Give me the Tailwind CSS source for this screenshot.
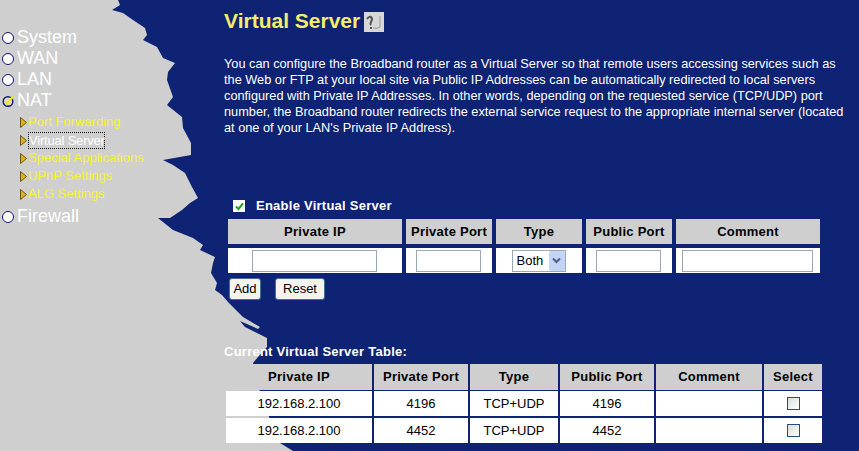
<!DOCTYPE html>
<html lang="en">
<head>
    <meta charset="UTF-8">
    <title>Virtual Server</title>
    <script src="https://cdn.jsdelivr.net/npm/@tailwindcss/browser@4"></script>
</head>
<body class="bg-[#0e2373]">
    <div class="relative w-[859px] h-[451px] overflow-hidden bg-[#0e2373] font-['Liberation_Sans',Arial,sans-serif]">
        <!-- torn paper edge behind everything -->
        <svg class="absolute left-0 top-0" width="859" height="451" viewBox="0 0 859 451">
            <polygon fill="#cfcfcf" points="0,0 118,0 120,5 112,10 123,13 133,20 145,28 147,35 143,40 157,47 163,58 175,63 168,72 167,80 173,97 167,105 182,117 183,128 191,143 191,155 163,160 173,165 185,173 192,187 198,198 190,203 182,210 170,218 158,218 173,230 193,238 203,245 200,250 215,257 213,263 211,273 217,283 215,290 222,295 228,302 233,307 243,317 260,327 258,329 240,321 245,327 255,332 267,338 267,347 258,357 253,363 262,400 280,443 293,451 0,451"/>
        </svg>

        <div class="relative flex h-full">
            <!-- left menu -->
            <aside class="w-[224px] shrink-0 pt-[27px] text-white">
                <div class="flex items-center h-[21px] text-[18px]"><span class="w-[12px] h-[12px] ml-[2px] mr-[3px] rounded-full border-[1.5px] border-[#14147a] bg-white"></span>System</div>
                <div class="flex items-center h-[21px] text-[18px]"><span class="w-[12px] h-[12px] ml-[2px] mr-[3px] rounded-full border-[1.5px] border-[#14147a] bg-white"></span>WAN</div>
                <div class="flex items-center h-[21px] text-[18px]"><span class="w-[12px] h-[12px] ml-[2px] mr-[3px] rounded-full border-[1.5px] border-[#14147a] bg-white"></span>LAN</div>
                <div class="flex items-center h-[21px] text-[18px]">
                    <svg class="ml-[2px] mr-[3px]" width="12" height="12" viewBox="0 0 12 12"><circle cx="6" cy="6.5" r="4.8" fill="#dfdfd0" stroke="#14147a" stroke-width="1.4"/><path d="M3 5.5l2 3 6-7" fill="none" stroke="#eeea20" stroke-width="2"/></svg>NAT
                </div>
                <div class="flex flex-col pl-[20px] pt-[2px] text-[13px] text-[#f5f52a]">
                    <div class="flex items-center h-[18px]"><svg class="mr-[1px]" width="7" height="11" viewBox="0 0 7 11"><path d="M.5.5 6.5 5.5.5 10.5z" fill="#e0b020" stroke="#6a5a10"/></svg>Port Forwarding</div>
                    <div class="flex items-center h-[18px]"><svg class="mr-[1px]" width="7" height="11" viewBox="0 0 7 11"><path d="M.5.5 6.5 5.5.5 10.5z" fill="#e0b020" stroke="#6a5a10"/></svg><span class="w-[77px] whitespace-nowrap tracking-[-0.2px] text-white border border-dotted border-black leading-[15px]">Virtual Server</span></div>
                    <div class="flex items-center h-[18px]"><svg class="mr-[1px]" width="7" height="11" viewBox="0 0 7 11"><path d="M.5.5 6.5 5.5.5 10.5z" fill="#e0b020" stroke="#6a5a10"/></svg>Special Applications</div>
                    <div class="flex items-center h-[18px]"><svg class="mr-[1px]" width="7" height="11" viewBox="0 0 7 11"><path d="M.5.5 6.5 5.5.5 10.5z" fill="#e0b020" stroke="#6a5a10"/></svg>UPnP Settings</div>
                    <div class="flex items-center h-[18px]"><svg class="mr-[1px]" width="7" height="11" viewBox="0 0 7 11"><path d="M.5.5 6.5 5.5.5 10.5z" fill="#e0b020" stroke="#6a5a10"/></svg>ALG Settings</div>
                </div>
                <div class="flex items-center h-[21px] mt-[3px] text-[18px]"><span class="w-[12px] h-[12px] ml-[2px] mr-[3px] rounded-full border-[1.5px] border-[#14147a] bg-white"></span>Firewall</div>
            </aside>

            <!-- main content -->
            <main class="flex-1 text-white">
                <div class="flex items-center h-[21px] mt-[10px] gap-[4px]">
                    <h1 class="text-[21px] font-bold text-[#f5ec6e]">Virtual Server</h1>
                    <svg class="mt-[2px]" width="20" height="20" viewBox="0 0 20 20"><rect width="20" height="20" fill="#d8d8d8"/><path d="M3 7q2-3 4-2 2 2 0 5-1 2 0 3" fill="none" stroke="#555" stroke-width="2"/><path d="M6 16h2" stroke="#555" stroke-width="2"/><path d="M9 16q5 1 7-1V4" fill="none" stroke="#999"/></svg>
                </div>
                <p class="mt-[25px] w-[625px] text-[12.75px] leading-[16px]">You can configure the Broadband router as a Virtual Server so that remote users accessing services such as the Web or FTP at your local site via Public IP Addresses can be automatically redirected to local servers configured with Private IP Addresses. In other words, depending on the requested service (TCP/UDP) port number, the Broadband router redirects the external service request to the appropriate internal server (located at one of your LAN's Private IP Address).</p>

                <div class="flex items-center h-[16px] mt-[62px] ml-[9px] text-[13px] tracking-[0.25px] font-bold">
                    <span class="flex items-center justify-center w-[12px] h-[12px] bg-white mr-[11px]">
                        <svg width="9" height="9" viewBox="0 0 9 9"><path d="M1 4.5 3.5 7 8 1.5" fill="none" stroke="#21a121" stroke-width="2"/></svg>
                    </span>Enable Virtual Server
                </div>

                <div class="grid grid-cols-[174px_86px_86px_86px_144px] grid-rows-[25px_25px] gap-[4px] ml-[4px] mt-[5px] text-[13px] text-black">
                    <div class="flex items-center justify-center bg-[#cfcfcf] font-bold tracking-[0.25px]">Private IP</div>
                    <div class="flex items-center justify-center bg-[#cfcfcf] font-bold tracking-[0.25px]">Private Port</div>
                    <div class="flex items-center justify-center bg-[#cfcfcf] font-bold tracking-[0.25px]">Type</div>
                    <div class="flex items-center justify-center bg-[#cfcfcf] font-bold tracking-[0.25px]">Public Port</div>
                    <div class="flex items-center justify-center bg-[#cfcfcf] font-bold tracking-[0.25px]">Comment</div>
                    <div class="flex items-center justify-center bg-white"><input type="text" class="w-[125px] h-[22px] mr-[1px] border border-[#9aa7b5] bg-white"></div>
                    <div class="flex items-center justify-center bg-white"><input type="text" class="w-[65px] h-[22px] mr-[1px] border border-[#9aa7b5] bg-white"></div>
                    <div class="flex items-center justify-center bg-white">
                        <div class="flex items-center justify-between w-[54px] h-[22px] mr-[1px] border border-[#9aa7b5] pl-[4px]">Both
                            <span class="flex items-center justify-center w-[16px] h-[20px] bg-[#c3d4f7] rounded-[2px]"><svg width="9" height="7" viewBox="0 0 9 7"><path d="M1 1.5 4.5 5 8 1.5" fill="none" stroke="#4d6185" stroke-width="2"/></svg></span>
                        </div>
                    </div>
                    <div class="flex items-center justify-center bg-white"><input type="text" class="w-[65px] h-[22px] mr-[1px] border border-[#9aa7b5] bg-white"></div>
                    <div class="flex items-center justify-center bg-white"><input type="text" class="w-[131px] h-[22px] mr-[1px] border border-[#9aa7b5] bg-white"></div>
                </div>

                <div class="flex ml-[5px] mt-[5px] gap-[14px] text-[13px] text-black">
                    <button class="w-[32px] h-[22px] bg-[#f5f5ee] border border-[#4a6a9a] rounded-[3px]">Add</button>
                    <button class="w-[50px] h-[22px] bg-[#f5f5ee] border border-[#4a6a9a] rounded-[3px]">Reset</button>
                </div>

                <h2 class="mt-[44px] text-[13px] tracking-[0.25px] leading-[16px] font-bold">Current Virtual Server Table:</h2>

                <div class="grid grid-cols-[146px_94px_88px_94px_106px_58px] grid-rows-[26px_26px_25px] gap-x-[2px] gap-y-[1px] ml-[2px] mt-[4px] text-[13px] text-black">
                    <div class="flex items-center justify-center bg-[#cfcfcf] font-bold tracking-[0.25px]">Private IP</div>
                    <div class="flex items-center justify-center bg-[#cfcfcf] font-bold tracking-[0.25px]">Private Port</div>
                    <div class="flex items-center justify-center bg-[#cfcfcf] font-bold tracking-[0.25px]">Type</div>
                    <div class="flex items-center justify-center bg-[#cfcfcf] font-bold tracking-[0.25px]">Public Port</div>
                    <div class="flex items-center justify-center bg-[#cfcfcf] font-bold tracking-[0.25px]">Comment</div>
                    <div class="flex items-center justify-center bg-[#cfcfcf] font-bold tracking-[0.25px]">Select</div>
                    <div class="flex items-center justify-center mb-[1px] bg-white">192.168.2.100</div>
                    <div class="flex items-center justify-center mb-[1px] bg-white">4196</div>
                    <div class="flex items-center justify-center mb-[1px] bg-white">TCP+UDP</div>
                    <div class="flex items-center justify-center mb-[1px] bg-white">4196</div>
                    <div class="mb-[1px] bg-white"></div>
                    <div class="flex items-center justify-center mb-[1px] bg-white"><span class="w-[13px] h-[13px] border border-[#1c5180] bg-linear-to-br from-[#dcdcd7] to-white"></span></div>
                    <div class="flex items-center justify-center bg-white">192.168.2.100</div>
                    <div class="flex items-center justify-center bg-white">4452</div>
                    <div class="flex items-center justify-center bg-white">TCP+UDP</div>
                    <div class="flex items-center justify-center bg-white">4452</div>
                    <div class="bg-white"></div>
                    <div class="flex items-center justify-center bg-white"><span class="w-[13px] h-[13px] border border-[#1c5180] bg-linear-to-br from-[#dcdcd7] to-white"></span></div>
                </div>
            </main>
        </div>
    </div>
</body>
</html>
